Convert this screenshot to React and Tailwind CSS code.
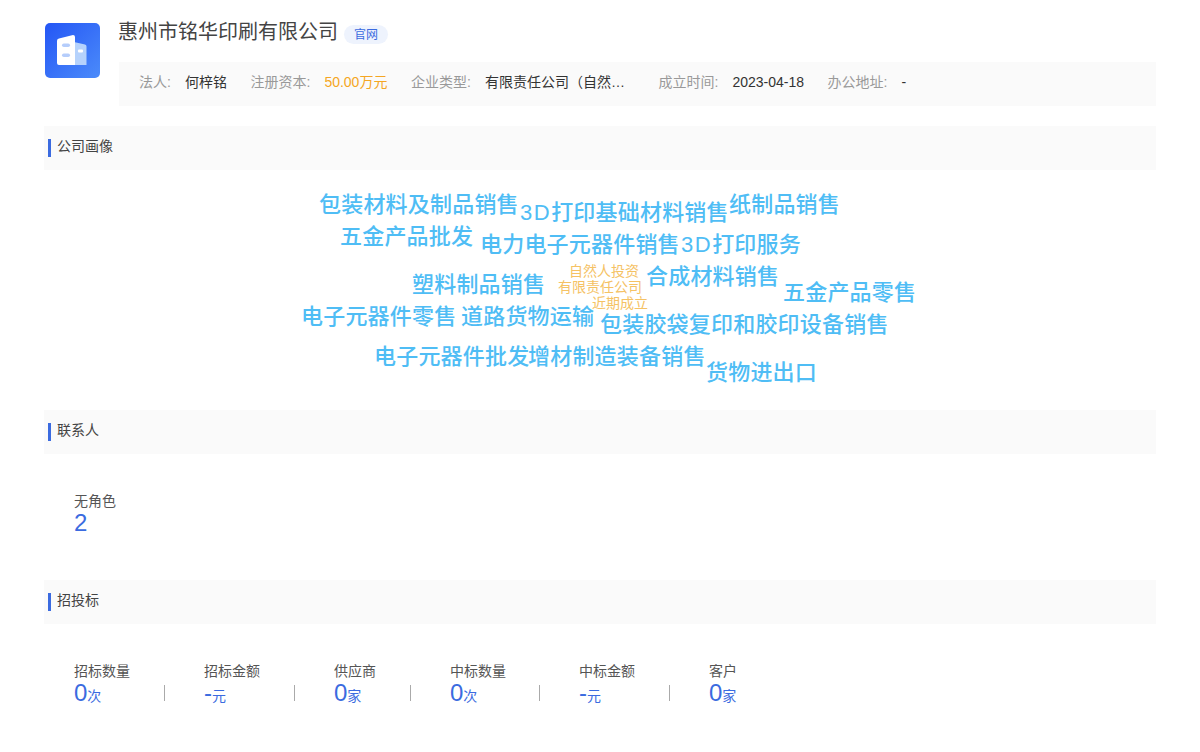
const threeD = <span className="tracking-[1.5px]">3D</span>

const blueWords = [
  { text: '包装材料及制品销售', cls: 'left-[275px] top-[20px]' },
  { text: <>{threeD}打印基础材料销售</>, cls: 'left-[476px] top-[28px]' },
  { text: '纸制品销售', cls: 'left-[685px] top-[20px]' },
  { text: '五金产品批发', cls: 'left-[296px] top-[52px]' },
  { text: '电力电子元器件销售', cls: 'left-[436px] top-[60px]' },
  { text: <>{threeD}打印服务</>, cls: 'left-[637px] top-[60px]' },
  { text: '塑料制品销售', cls: 'left-[368px] top-[100px]' },
  { text: '合成材料销售', cls: 'left-[602px] top-[92px]' },
  { text: '五金产品零售', cls: 'left-[739px] top-[108px]' },
  { text: '电子元器件零售', cls: 'left-[257px] top-[132px]' },
  { text: '道路货物运输', cls: 'left-[417px] top-[132px]' },
  { text: '包装胶袋复印和胶印设备销售', cls: 'left-[556px] top-[140px]' },
  { text: '电子元器件批发', cls: 'left-[330px] top-[172px]' },
  { text: '增材制造装备销售', cls: 'left-[484px] top-[172px]' },
  { text: '货物进出口', cls: 'left-[662px] top-[188px]' },
]

const orangeWords = [
  { text: '自然人投资', cls: 'left-[525px] top-[92px]' },
  { text: '有限责任公司', cls: 'left-[514px] top-[108px]' },
  { text: '近期成立', cls: 'left-[548px] top-[124px]' },
]

const bidStats = [
  { label: '招标数量', value: '0', unit: '次', gap: 'ml-[34px]' },
  { label: '招标金额', value: '-', unit: '元', gap: 'ml-[34px]' },
  { label: '供应商', value: '0', unit: '家', gap: 'ml-[34px]' },
  { label: '中标数量', value: '0', unit: '次', gap: 'ml-[33px]' },
  { label: '中标金额', value: '-', unit: '元', gap: 'ml-[34px]' },
  { label: '客户', value: '0', unit: '家' },
]

const Logo = () => (
  <svg width="55" height="55" viewBox="0 0 55 55" className="shrink-0 rounded-[5px]">
    <defs>
      <linearGradient id="logoBg" x1="0" y1="0" x2="1" y2="1">
        <stop offset="0" stopColor="#2456f5" />
        <stop offset="1" stopColor="#4b8bfa" />
      </linearGradient>
    </defs>
    <rect width="55" height="55" fill="url(#logoBg)" />
    <path d="M29 19l11 2.5a2 2 0 0 1 1.500 2V42H29z" fill="#b5d2fc" />
    <path d="M14 15.500L28 12a2 2 0 0 1 2 2v28H14a2 2 0 0 1-2-2V18a2.500 2.500 0 0 1 2-2.500z" fill="#ffffff" />
    <rect x="17" y="20.500" width="8" height="3.500" rx="1.750" fill="#b5cdfb" />
    <rect x="17" y="30.500" width="8" height="3.500" rx="1.750" fill="#b5cdfb" />
    <rect x="33" y="26.500" width="5" height="3" rx="1" fill="#ffffff" />
  </svg>
)

const InfoItem = ({ label, children, valueClass = 'text-[#333]' }) => (
  <div className="flex items-center">
    <span className="mr-[14px] text-[#999]">{label}:</span>
    <span className={valueClass}>{children}</span>
  </div>
)

const SectionTitle = ({ children }) => (
  <div className="flex h-[44px] items-start bg-[#fafafa] pl-[4px]">
    <div className="mt-[13px] h-[18px] w-[3px] bg-[#3b6be0]" />
    <div className="mt-[9px] ml-[6px] text-[14px] leading-[22px] text-[#444]">{children}</div>
  </div>
)

const BidStat = ({ label, value, unit }) => (
  <div>
    <div className="text-[14px] leading-[20px] text-[#555]">{label}</div>
    <div className="flex h-[24px] items-end leading-none text-[#3b6be0]">
      <span className="text-[24px]">{value}</span>
      <span className="mb-[2px] text-[14px]">{unit}</span>
    </div>
  </div>
)

export default function App() {
  return (
    <div className="min-h-[752px] bg-white px-[44px] font-['Liberation_Sans','Noto_Sans_CJK_SC',sans-serif]">
      {/* header */}
      <div className="flex pt-[20px]">
        <div className="mt-[3px] ml-px">
          <Logo />
        </div>
        <div className="ml-[19px] flex-1">
          <div className="flex h-[24px] items-center">
            <h1 className="-ml-px text-[20px] leading-[24px] font-normal text-[#444]">惠州市铭华印刷有限公司</h1>
            <span className="mt-[5px] ml-[6px] flex h-[19px] w-[44px] items-center justify-center rounded-full bg-[#eef3fd] text-[12px] text-[#3b6be0]">
              官网
            </span>
          </div>
          <div className="mt-[18px] flex h-[44px] items-center gap-[23.6px] bg-[#fafafa] pb-[4px] pl-[20px] text-[14px]">
            <InfoItem label="法人">何梓铭</InfoItem>
            <InfoItem label="注册资本" valueClass="text-[#f5a623]">50.00万元</InfoItem>
            <InfoItem label="企业类型" valueClass="w-[150px] truncate text-[#333]">有限责任公司（自然人投资或控股）</InfoItem>
            <InfoItem label="成立时间">2023-04-18</InfoItem>
            <InfoItem label="办公地址">-</InfoItem>
          </div>
        </div>
      </div>

      {/* company portrait */}
      <div className="mt-[20px]">
        <SectionTitle>公司画像</SectionTitle>
        <div className="relative h-[240px]">
          {blueWords.map((w, i) => (
            <span key={i} className={`absolute whitespace-nowrap text-[22px] leading-[30px] font-medium tracking-[0.2px] text-[#4fbdf5] ${w.cls}`}>
              {w.text}
            </span>
          ))}
          {orangeWords.map((w) => (
            <span key={w.text} className={`absolute whitespace-nowrap text-[14px] leading-[18px] text-[#f5c264] ${w.cls}`}>
              {w.text}
            </span>
          ))}
        </div>
      </div>

      {/* contacts */}
      <SectionTitle>联系人</SectionTitle>
      <div className="h-[126px] pt-[37px] pl-[30px]">
        <div className="text-[14px] leading-[20px] text-[#555]">无角色</div>
        <div className="text-[24px] leading-[24px] text-[#3b6be0]">2</div>
      </div>

      {/* bidding */}
      <SectionTitle>招投标</SectionTitle>
      <div className="flex items-end pt-[37px] pl-[30px]">
        {bidStats.map((s) => (
          <div key={s.label} className="flex items-end">
            <BidStat {...s} />
            {s.gap && <div className={`mr-[39px] mb-[4px] h-[16px] w-px bg-[#aaa] ${s.gap}`} />}
          </div>
        ))}
      </div>
    </div>
  )
}
